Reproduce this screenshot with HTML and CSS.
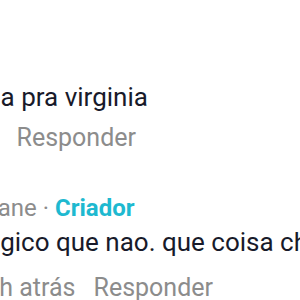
FILE: index.html
```html
<!DOCTYPE html>
<html lang="pt">
<head>
<meta charset="utf-8">
<link rel="stylesheet" href="styles.css">
</head>
<body>
<div class="thread">
  <div class="comment">
    <p class="text">Manda ela pra virginia</p>
    <div class="meta meta-first"><span class="time">3 h atrás</span><span class="reply">Responder</span></div>
  </div>
  <div class="comment reply-comment">
    <div class="author"><span class="name">Liane</span> · <span class="creator">Criador</span></div>
    <p class="text">lógico que nao. que coisa chata</p>
    <div class="meta meta-last"><span class="time">2 h atrás</span><span class="reply">Responder</span></div>
  </div>
</div>
</body>
</html>
```
FILE: styles.css
```css
html, body {
  margin: 0;
  padding: 0;
  background: #fff;
  overflow: hidden;
}
body {
  width: 300px;
  height: 300px;
  font-family: Roboto, "Liberation Sans", sans-serif;
  font-size: 25px;
}
.thread {
  margin-left: -106px;
  padding-top: 80px;
  width: 600px;
}
.comment {
  display: flex;
  flex-direction: column;
}
.text {
  margin: 0;
  color: #181a2a;
  font-size: 26px;
  line-height: 34px;
  white-space: nowrap;
}
.meta {
  display: flex;
  gap: 18px;
  color: #8c8c8c;
  line-height: 34px;
  white-space: nowrap;
}
.meta-first {
  margin-top: 7px;
  gap: 26px;
}
.meta-last {
  margin-top: 12px;
}
.reply-comment {
  margin-left: 85px;
  margin-top: 36px;
}
.author {
  color: #8c8c8c;
  font-size: 24px;
  line-height: 34px;
  white-space: nowrap;
}
.creator {
  color: #1eb9d0;
  font-weight: 700;
}
```
